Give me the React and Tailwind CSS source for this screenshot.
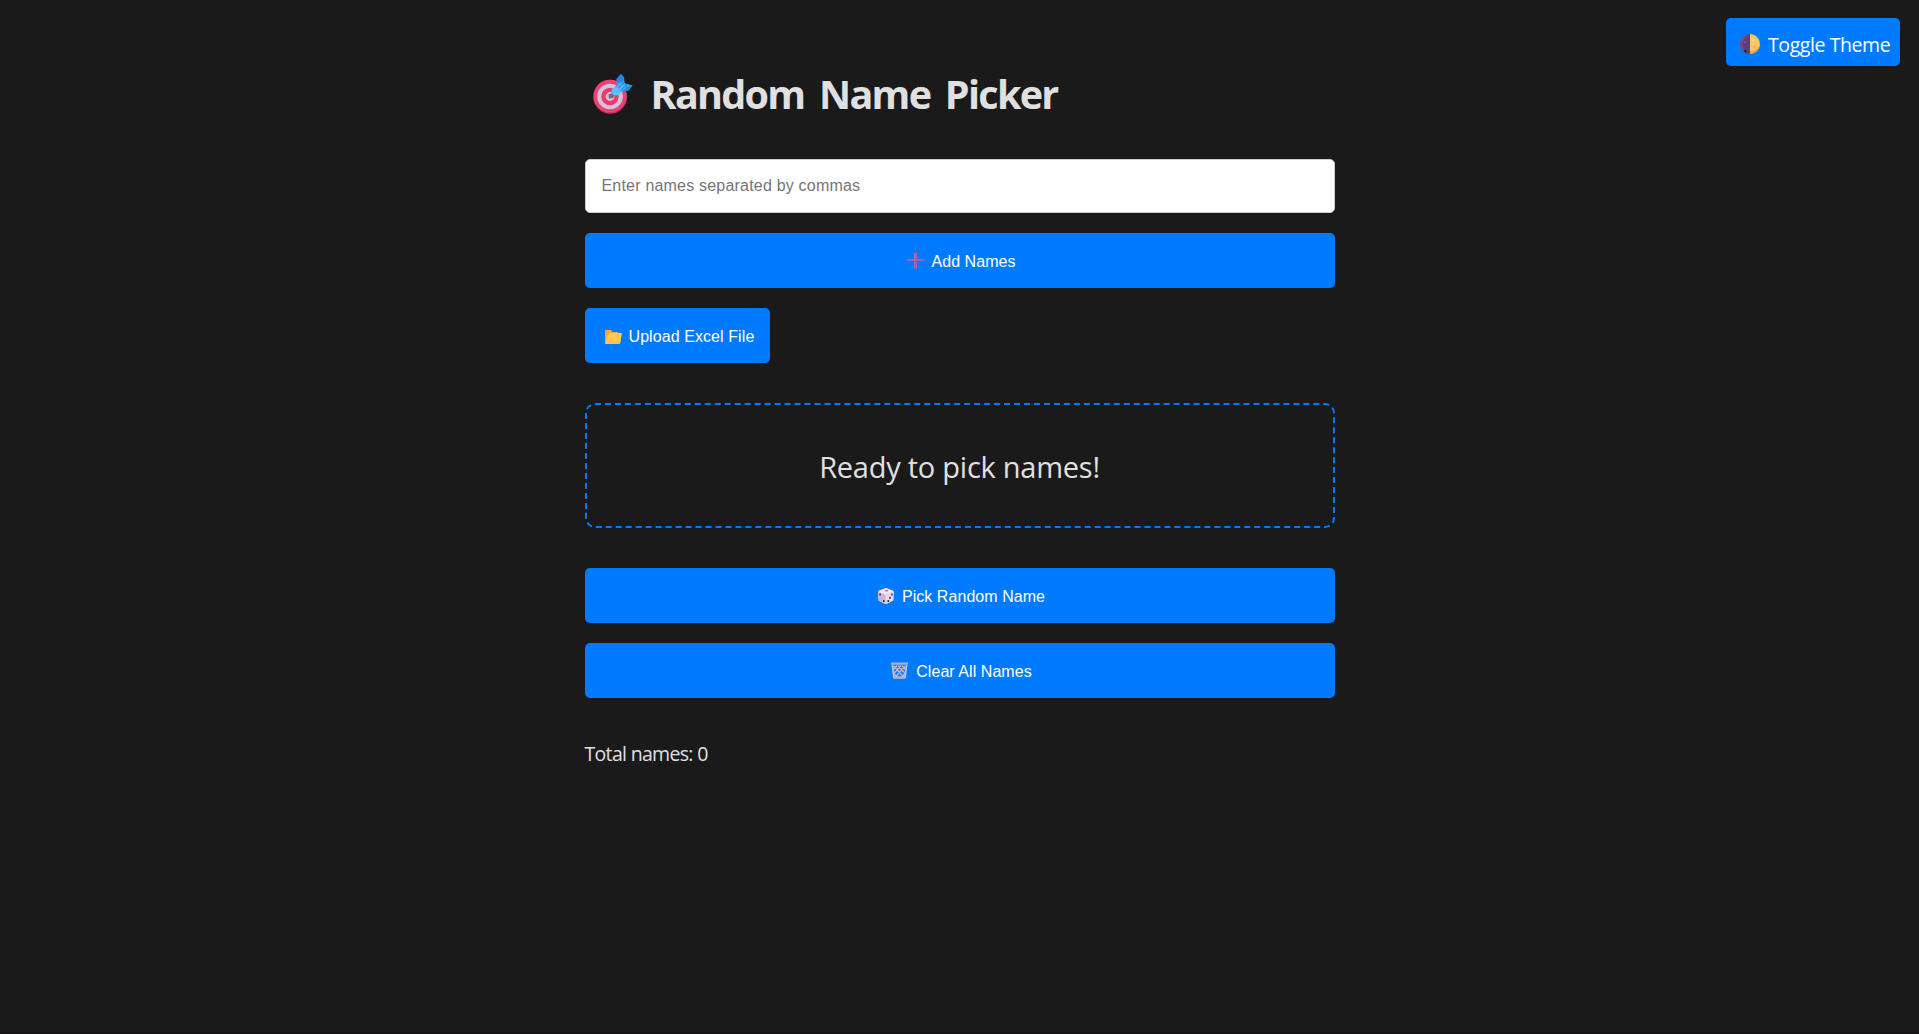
import React from "react";

const TargetIcon = () => (
  <svg viewBox="0 0 40 40" className="h-10 w-10 shrink-0">
    <circle cx="17.2" cy="22.8" r="17" fill="#c22f58" />
    <circle cx="17" cy="22.2" r="16.4" fill="#ee4170" />
    <circle cx="17" cy="22.5" r="12.8" fill="#d3c1e2" />
    <circle cx="17" cy="22.5" r="8.7" fill="#ea3c69" />
    <circle cx="17" cy="22.5" r="4.4" fill="#d0bfdc" />
    <path d="M15.500 20.500l4-1.500 2.500 2-2 3-4 .5z" fill="#7b6482" />
    <path d="M19.500 15l4.500-4-.5-6L28 0l3 3.500.5 5.500 3 1 5 1.500-4 5-7 1-3.500 3.500-4 .5-1.500-3z" fill="#38a5f4" />
    <path d="M24 9l-.5-4L28 0l3 3.500-.5 4zM31 14l8.500-2.500-4 5-6 1z" fill="#2784e5" />
    <circle cx="22.800" cy="17.200" r="4.300" fill="#5cc0fa" />
    <path d="M24 13l4-4 5 5-5 4z" fill="#50b5f8" />
    <path d="M25.500 14l6.500-6.500M28 16.500l6.500-6.500" stroke="#2379d8" strokeWidth="1" />
  </svg>
);

const MoonIcon = () => (
  <svg viewBox="0 0 20 20" className="mt-1 h-5 w-5 shrink-0">
    <path d="M10 0a10 10 0 0 0 0 20z" fill="#5f3c84" />
    <path d="M10 0a10 10 0 0 1 0 20z" fill="#ffc65c" />
    <path d="M8.500 .2A10 10 0 0 0 3 17l1-2A9 9 0 0 1 4 5z" fill="#765178" />
    <path d="M4.500 15.500l2 1v2.500l-2-1z" fill="#281a36" />
    <circle cx="5" cy="8" r="1.200" fill="#754aa0" />
    <circle cx="13" cy="5.500" r="1.500" fill="#ffd985" />
    <circle cx="15" cy="12.500" r="1.200" fill="#f4b04e" />
    <path d="M10 17.500c4 0 7-2 9-5A10 10 0 0 1 10 20z" fill="#f5a352" />
  </svg>
);

const PlusIcon = () => (
  <svg viewBox="0 0 17 17" className="h-[17px] w-[17px] shrink-0">
    <rect x="7.200" y="0.500" width="2.800" height="16" rx="0.500" fill="#a659b8" />
    <rect x="0.300" y="7" width="16.400" height="2.800" rx="0.500" fill="#a659b8" />
    <path d="M.5 9.500h16" stroke="#8d36d4" strokeWidth="0.800" />
    <path d="M7.700 1v15" stroke="#b97aaf" strokeWidth="0.800" />
  </svg>
);

const FolderIcon = () => (
  <svg viewBox="0 0 17 15" className="mt-[3px] h-[15px] w-[17px] shrink-0">
    <path d="M0 0h6l1.500 2H13v3L2 14H0z" fill="#f4a93b" />
    <path d="M4 4l2-1h11l-2 11H1l1-8z" fill="#ffc952" />
    <path d="M1.500 11h14l-.6 3H1z" fill="#fbc05e" />
  </svg>
);

const DiceIcon = () => (
  <svg viewBox="0 0 16 16" className="mt-px h-4 w-4 shrink-0">
    <path d="M8 0l7 2.600L16 4l-.5 8.500L8.500 16H7L.5 12.500 0 4l1-1.400z" fill="#e3dcec" />
    <path d="M0 4l7.500 3v9L.5 12.500z" fill="#c6bad2" />
    <path d="M1 3l7-2.800L15 3 8 6z" fill="#f2ecf6" />
    <ellipse cx="8.500" cy="2.700" rx="1.900" ry="0.800" fill="#ef456f" />
    <g fill="#40305c">
      <rect x="1.300" y="5.500" width="1.600" height="2" />
      <rect x="5" y="12" width="1.600" height="2" />
      <rect x="13.200" y="5.500" width="1.600" height="2" />
      <rect x="11.200" y="8.800" width="1.600" height="2" />
      <rect x="9.500" y="12" width="1.600" height="2" />
    </g>
  </svg>
);

const TrashIcon = () => (
  <svg viewBox="0 0 17 17" className="h-[17px] w-[17px] shrink-0" fill="none">
    <path d="M1.500 3l1.500 12.500h11L15.500 3" stroke="#c4bccb" strokeWidth="1.900" />
    <path
      d="M3 4l9.500 11M7 3.500l7 8M11 3.500l3.500 4M14 4L4.500 15M10 3.500l-7 8M6 3.500L2.500 7.500M3 11.500L6 15M14 11.500L11 15"
      stroke="#c0bbd0"
      strokeWidth="1.200"
    />
    <path d="M3 14.500h11v2.100H3z" fill="#b9b0c0" />
    <path d="M0 .5h17v2.200H0z" fill="#b9b0be" />
  </svg>
);

const buttonClass =
  "flex h-[55px] w-full items-center justify-center rounded-[5px] bg-[#007bff] pl-1 font-['Liberation_Sans',Arial,sans-serif] text-[16px] leading-5 tracking-[0.050px] text-white cursor-pointer";

export default function App() {
  return (
    <div className="relative flex h-[1034px] w-full flex-col items-center overflow-hidden border-b-2 border-[#181216] bg-[#1a1a1a] font-['Open_Sans','Noto_Sans',sans-serif] text-[#e0e0e0]">
      <button className="absolute top-[18px] right-[19px] flex h-12 w-[174px] cursor-pointer items-center rounded-[5px] bg-[#007bff] pl-3.5 text-white">
        <MoonIcon />
        <span className="ml-2 pt-[5px] text-[19.500px] leading-6 tracking-[-0.420px] whitespace-nowrap">Toggle Theme</span>
      </button>

      <main className="flex w-[750px] flex-col items-start pt-[60px]">
        <h1 className="flex h-[68px] items-center pl-2">
          <TargetIcon />
          <span className="ml-[18px] text-[39.500px] leading-[68px] font-bold tracking-[-1.700px] [word-spacing:6px] whitespace-nowrap">
            Random Name Picker
          </span>
        </h1>

        <input
          type="text"
          placeholder="Enter names separated by commas"
          className="mt-[31px] h-[54px] w-full rounded-[5px] border border-[#ccc] bg-white px-4 font-['Liberation_Sans',Arial,sans-serif] text-[16px] tracking-[0.200px] text-black outline-none placeholder:text-[#757575]"
        />

        <button className={buttonClass + " mt-5"}>
          <PlusIcon />
          <span className="ml-[7px] pt-0.5">Add Names</span>
        </button>

        <label className="mt-5 flex h-[55px] w-[185px] cursor-pointer items-center rounded-[5px] bg-[#007bff] pl-5 font-['Liberation_Sans',Arial,sans-serif] text-[16px] leading-5 tracking-[0.080px] whitespace-nowrap text-white">
          <FolderIcon />
          <span className="ml-[7px] pt-0.5">Upload Excel File</span>
        </label>

        <div className="mt-10 flex h-[125px] w-full items-center justify-center rounded-[10px] border-2 border-dashed border-[#007bff]">
          <span className="pt-[3px] text-[29px] leading-10 tracking-[-0.250px] whitespace-nowrap">Ready to pick names!</span>
        </div>

        <button className={buttonClass + " mt-10"}>
          <DiceIcon />
          <span className="ml-2 pt-0.5">Pick Random Name</span>
        </button>

        <button className={buttonClass + " mt-5"}>
          <TrashIcon />
          <span className="ml-2 pt-0.5">Clear All Names</span>
        </button>

        <p className="mt-10 text-[19.500px] leading-8 tracking-[-0.680px] whitespace-nowrap">Total names: 0</p>
      </main>
    </div>
  );
}
